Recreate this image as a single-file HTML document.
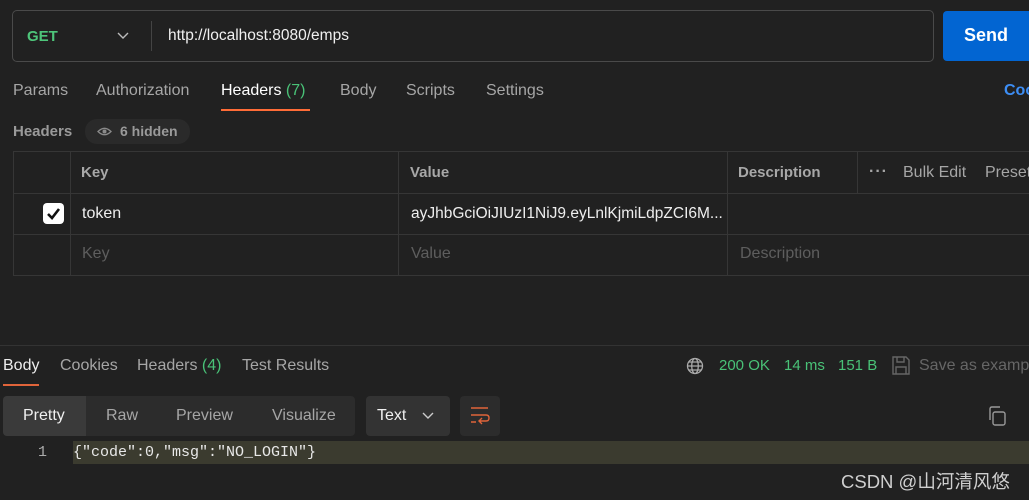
<!DOCTYPE html>
<html><head><meta charset="utf-8"><style>
*{margin:0;padding:0;box-sizing:border-box}
body{width:1029px;height:500px;background:#212121;font-family:"Liberation Sans",sans-serif;color:#a6a6a6;position:relative;overflow:hidden;font-size:16px}
.a{position:absolute;white-space:nowrap}
.g{color:#49c277}
.w{color:#fff}
</style></head><body>
<div class="a" style="left:12px;top:10px;width:922px;height:52px;border:1px solid #4a4a4a;border-radius:5px"></div>
<div class="a g" style="left:27px;top:28px;font-weight:bold;font-size:15px;color:#4ec57a">GET</div>
<svg class="a" style="left:117px;top:31px" width="12" height="10"><path d="M1 2 L6 7 L11 2" stroke="#bbb" stroke-width="1.4" fill="none"/></svg>
<div class="a" style="left:151px;top:21px;width:1px;height:30px;background:#444"></div>
<div class="a w" style="left:168px;top:27px;font-size:15.5px;color:#f0f0f0">http://localhost:8080/emps</div>
<div class="a" style="left:943px;top:11px;width:90px;height:50px;background:#0265d2;border-radius:4px"></div>
<div class="a w" style="left:964px;top:25px;font-weight:bold;font-size:18px">Send</div>

<div class="a" style="left:13px;top:82px">Params</div>
<div class="a" style="left:96px;top:82px">Authorization</div>
<div class="a w" style="left:221px;top:82px">Headers <span class="g">(7)</span></div>
<div class="a" style="left:221px;top:109px;width:89px;height:2px;background:#ff6c37"></div>
<div class="a" style="left:340px;top:82px">Body</div>
<div class="a" style="left:406px;top:82px">Scripts</div>
<div class="a" style="left:486px;top:82px">Settings</div>
<div class="a" style="left:1004px;top:82px;color:#3d8ef5;font-weight:bold">Cookies</div>

<div class="a" style="left:13px;top:123px;font-weight:bold;color:#9a9a9a;font-size:15px">Headers</div>
<div class="a" style="left:85px;top:119px;width:105px;height:25px;background:#2a2a2a;border-radius:12px"></div>
<svg class="a" style="left:97px;top:126px" width="15" height="11"><path d="M1 5.5 Q7.5 -1 14 5.5 Q7.5 12 1 5.5Z" stroke="#8a8a8a" stroke-width="1.3" fill="none"/><circle cx="7.5" cy="5.5" r="2" fill="#8a8a8a"/></svg>
<div class="a" style="left:120px;top:123px;font-weight:bold;font-size:14px;color:#9a9a9a">6 hidden</div>

<div class="a" style="left:13px;top:151px;width:1020px;height:125px;border:1px solid #363636"></div>
<div class="a" style="left:13px;top:193px;width:1016px;height:1px;background:#363636"></div>
<div class="a" style="left:13px;top:234px;width:1016px;height:1px;background:#363636"></div>
<div class="a" style="left:70px;top:151px;width:1px;height:125px;background:#363636"></div>
<div class="a" style="left:398px;top:151px;width:1px;height:125px;background:#363636"></div>
<div class="a" style="left:727px;top:151px;width:1px;height:125px;background:#363636"></div>
<div class="a" style="left:857px;top:152px;width:1px;height:41px;background:#363636"></div>
<div class="a" style="left:81px;top:164px;font-weight:bold;color:#a8a8a8;font-size:15px">Key</div>
<div class="a" style="left:410px;top:164px;font-weight:bold;color:#a8a8a8;font-size:15px">Value</div>
<div class="a" style="left:738px;top:164px;font-weight:bold;color:#a8a8a8;font-size:15px">Description</div>
<div class="a" style="left:869px;top:163px;font-weight:bold;letter-spacing:1px">···</div>
<div class="a" style="left:903px;top:164px">Bulk Edit</div>
<div class="a" style="left:985px;top:164px">Presets</div>
<div class="a" style="left:43px;top:203px;width:21px;height:21px;background:#fff;border-radius:4px"></div>
<svg class="a" style="left:43px;top:203px" width="21" height="21"><path d="M5 11 L9 15 L16 6" stroke="#111" stroke-width="2.6" fill="none"/></svg>
<div class="a w" style="left:82px;top:205px;color:#eee">token</div>
<div class="a w" style="left:411px;top:205px;color:#eee;font-size:15.5px">ayJhbGciOiJIUzI1NiJ9.eyLnlKjmiLdpZCI6M...</div>
<div class="a" style="left:82px;top:245px;color:#5e5e5e">Key</div>
<div class="a" style="left:411px;top:245px;color:#5e5e5e">Value</div>
<div class="a" style="left:740px;top:245px;color:#5e5e5e">Description</div>

<div class="a" style="left:0;top:345px;width:1029px;height:1px;background:#333"></div>
<div class="a w" style="left:3px;top:357px;color:#eee">Body</div>
<div class="a" style="left:3px;top:384px;width:36px;height:2px;background:#e0643a"></div>
<div class="a" style="left:60px;top:357px">Cookies</div>
<div class="a" style="left:137px;top:357px">Headers <span class="g">(4)</span></div>
<div class="a" style="left:242px;top:357px">Test Results</div>
<svg class="a" style="left:686px;top:357px" width="18" height="18"><g stroke="#aaa" stroke-width="1.3" fill="none"><circle cx="9" cy="9" r="7.5"/><ellipse cx="9" cy="9" rx="3.3" ry="7.5"/><path d="M1.5 9H16.5M3 5H15M3 13H15"/></g></svg>
<div class="a g" style="left:719px;top:357px;font-size:15px">200 OK</div>
<div class="a g" style="left:784px;top:357px;font-size:15px">14 ms</div>
<div class="a g" style="left:838px;top:357px;font-size:15px">151 B</div>
<svg class="a" style="left:892px;top:356px" width="18" height="19"><g stroke="#666" stroke-width="1.4" fill="none"><path d="M1 1H14L17 4V18H1Z"/><path d="M5 1V6H12V1M4 18V11H14V18"/></g></svg>
<div class="a" style="left:919px;top:357px;color:#666">Save as example</div>

<div class="a" style="left:3px;top:396px;width:352px;height:40px;background:#2c2c2c;border-radius:4px"></div>
<div class="a" style="left:3px;top:396px;width:83px;height:40px;background:#3a3a3a;border-radius:4px 0 0 4px"></div>
<div class="a w" style="left:23px;top:407px;color:#f0f0f0">Pretty</div>
<div class="a" style="left:106px;top:407px">Raw</div>
<div class="a" style="left:176px;top:407px">Preview</div>
<div class="a" style="left:272px;top:407px">Visualize</div>
<div class="a" style="left:366px;top:396px;width:84px;height:40px;background:#333;border-radius:4px"></div>
<div class="a w" style="left:377px;top:407px;color:#f0f0f0">Text</div>
<svg class="a" style="left:422px;top:412px" width="12" height="8"><path d="M1 1 L6 6 L11 1" stroke="#ccc" stroke-width="1.4" fill="none"/></svg>
<div class="a" style="left:460px;top:396px;width:40px;height:40px;background:#2c2c2c;border-radius:4px"></div>
<svg class="a" style="left:470px;top:406px" width="20" height="20"><g stroke="#e0643a" stroke-width="1.4" fill="none"><path d="M1 2H18M1 9H16Q19 9 19 12Q19 15 16 15H10M12 12L9 15L12 18M1 16H6"/></g></svg>
<svg class="a" style="left:988px;top:406px" width="19" height="20"><g stroke="#999" stroke-width="1.4" fill="none"><rect x="5" y="6" width="12" height="13" rx="2"/><path d="M2 14V3Q2 1 4 1H12"/></g></svg>

<div class="a" style="left:73px;top:441px;width:956px;height:23px;background:#3b3b2f"></div>
<div class="a" style="left:38px;top:444px;font-family:'Liberation Mono',monospace;font-size:15px;color:#aaa">1</div>
<div class="a" style="left:73px;top:444px;font-family:'Liberation Mono',monospace;font-size:15px;color:#e8e8e8">{"code":0,"msg":"NO_LOGIN"}</div>
<div class="a" style="left:841px;top:468px;font-size:18.5px;color:#cfcfcf;font-family:'Liberation Sans','Noto Sans CJK SC',sans-serif">CSDN @山河清风悠</div>
</body></html>
